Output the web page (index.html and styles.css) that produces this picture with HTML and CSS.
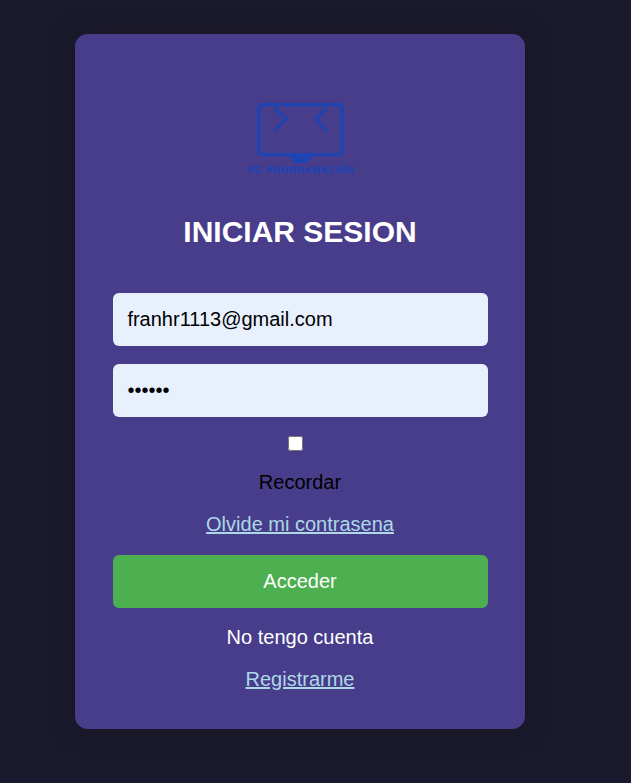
FILE: index.html
```html
<!DOCTYPE html>
<html lang="es">
<head>
<meta charset="utf-8">
<title>Iniciar sesion</title>
<link rel="stylesheet" href="styles.css">
</head>
<body>
<form class="login">
  <svg class="logo" viewBox="0 0 140 95" role="img" aria-label="PC Programación">
    <rect x="28.9" y="14.6" width="83.2" height="50" rx="2.8" fill="none" stroke="#1e44b4" stroke-width="3.4"/>
    <path d="M45.5 18.8 56 29.3 45.5 40M96 18.8 85.5 29.3 96 40" fill="none" stroke="#1e44b4" stroke-width="3.2" stroke-linecap="round"/>
    <path d="M58.7 65.5H82.3L78.8 71.5 77 73H65L63 71.5Z" fill="#1e44b4"/>
    <text class="brand" x="17.5" y="83.2" textLength="106.5">PC PROGRAMACIÓN</text>
  </svg>
  <h1 class="title">INICIAR SESION</h1>
  <input class="field" type="email" value="franhr1113@gmail.com" aria-label="Email">
  <input class="field" type="password" value="secret" aria-label="Password">
  <input class="check" type="checkbox" id="remember">
  <label class="line remember" for="remember">Recordar</label>
  <a class="line link" href="#">Olvide mi contrasena</a>
  <button class="submit" type="button">Acceder</button>
  <p class="line">No tengo cuenta</p>
  <a class="line link" href="#">Registrarme</a>
</form>
</body>
</html>
```
FILE: styles.css
```css
* {
  box-sizing: border-box;
}

body {
  margin: 0;
  min-height: 783px;
  padding: 34.4px 0 0 75px;
  background: #1a1a2e;
  font-family: "Liberation Sans", Arial, sans-serif;
  font-size: 20px;
  overflow: hidden;
}

.login {
  display: flex;
  flex-direction: column;
  align-items: center;
  width: 450px;
  height: 694.4px;
  padding: 55.6px 37px 0 38px;
  border-radius: 12.5px;
  background: #483d8b;
  box-shadow: 0 0 25px rgba(26, 20, 28, 0.7);
  color: #fff;
}

.logo {
  width: 140px;
  height: 95px;
  margin-right: 1px;
}

.brand {
  fill: #1e44b4;
  stroke: #1e44b4;
  stroke-width: 0.5px;
  font-size: 9.2px;
  font-weight: bold;
  text-rendering: geometricPrecision;
}

.title {
  margin: 30px 1px 44px 0;
  font-size: 30px;
  line-height: 34px;
}

.field {
  width: 100%;
  height: 53px;
  margin: 0 0 18px;
  padding: 0 14.4px;
  border: 0;
  border-radius: 6px;
  background: #e8f0fe;
  color: #000;
  font: inherit;
}

.check {
  width: 15px;
  height: 15px;
  margin: 1px 10px 20px 0;
}

.line {
  margin: 0 1px 19px 0;
  line-height: 23px;
}

.remember {
  color: #000;
}

.link {
  color: #add8e6;
  text-decoration-thickness: 2px;
}

.submit {
  flex: none;
  width: 100%;
  height: 53px;
  margin: 0 0 18px;
  padding: 0 7px 0 6px;
  border: 0;
  border-radius: 6px;
  background: #4caf50;
  color: #fff;
  font: inherit;
}
```
